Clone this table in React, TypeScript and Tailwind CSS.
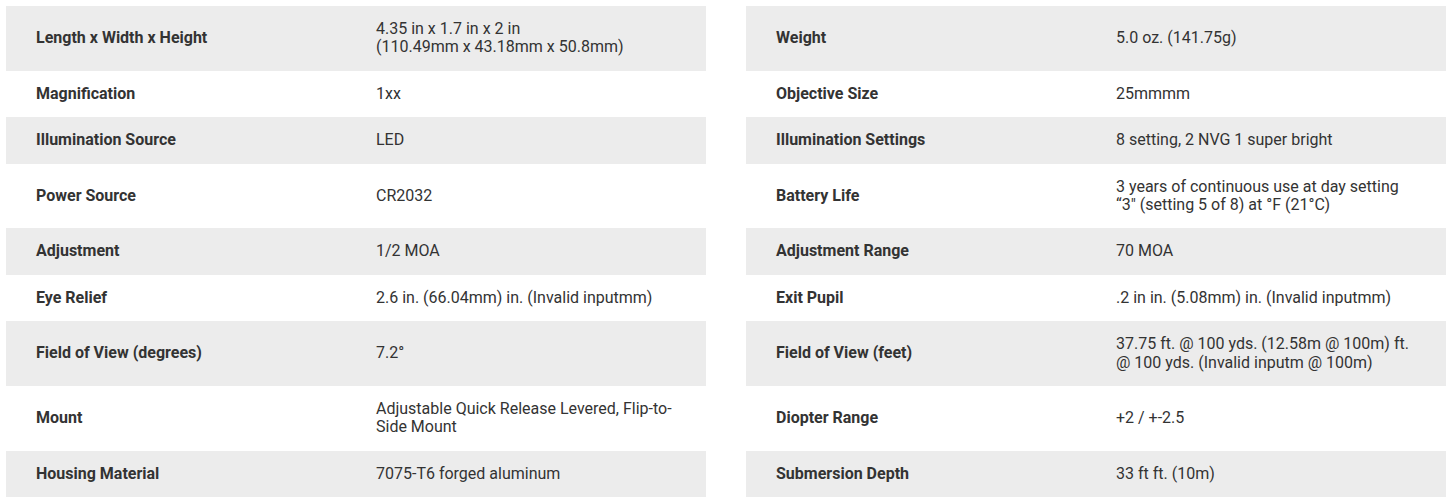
const LEFT = [
  { label: "Length x Width x Height", value: ["4.35 in x 1.7 in x 2 in", "(110.49mm x 43.18mm x 50.8mm)"] },
  { label: "Magnification", value: ["1xx"] },
  { label: "Illumination Source", value: ["LED"] },
  { label: "Power Source", value: ["CR2032"] },
  { label: "Adjustment", value: ["1/2 MOA"] },
  { label: "Eye Relief", value: ["2.6 in. (66.04mm) in. (Invalid inputmm)"] },
  { label: "Field of View (degrees)", value: ["7.2°"] },
  { label: "Mount", value: ["Adjustable Quick Release Levered, Flip-to-Side Mount"] },
  { label: "Housing Material", value: ["7075-T6 forged aluminum"] },
];

const RIGHT = [
  { label: "Weight", value: ["5.0 oz. (141.75g)"] },
  { label: "Objective Size", value: ["25mmmm"] },
  { label: "Illumination Settings", value: ["8 setting, 2 NVG 1 super bright"] },
  { label: "Battery Life", value: ["3 years of continuous use at day setting “3\" (setting 5 of 8) at °F (21°C)"] },
  { label: "Adjustment Range", value: ["70 MOA"] },
  { label: "Exit Pupil", value: [".2 in in. (5.08mm) in. (Invalid inputmm)"] },
  { label: "Field of View (feet)", value: ["37.75 ft. @ 100 yds. (12.58m @ 100m) ft. @ 100 yds. (Invalid inputm @ 100m)"] },
  { label: "Diopter Range", value: ["+2 / +-2.5"] },
  { label: "Submersion Depth", value: ["33 ft ft. (10m)"] },
];

type Spec = (typeof LEFT)[number];

function SpecCell({ spec, shaded }: { spec: Spec; shaded: boolean }) {
  return (
    <div className={`flex items-center py-[14px] ${shaded ? "bg-[#ececec]" : "bg-white"}`}>
      <div className="w-[370px] shrink-0 pl-[30px] font-bold">{spec.label}</div>
      <div className="flex-1 pr-[30px]">
        {spec.value.map((line) => (
          <div key={line}>{line}</div>
        ))}
      </div>
    </div>
  );
}

export default function App() {
  return (
    <div className="bg-white min-h-screen pt-[6px] pl-[6px] text-[16px] leading-[18.4px] text-[#333333] font-['Roboto',sans-serif]">
      <div className="grid grid-cols-[700px_700px] gap-x-[40px]">
        {LEFT.map((spec, index) => (
          <div key={spec.label} className="contents">
            <SpecCell spec={spec} shaded={index % 2 === 0} />
            <SpecCell spec={RIGHT[index]} shaded={index % 2 === 0} />
          </div>
        ))}
      </div>
    </div>
  );
}
